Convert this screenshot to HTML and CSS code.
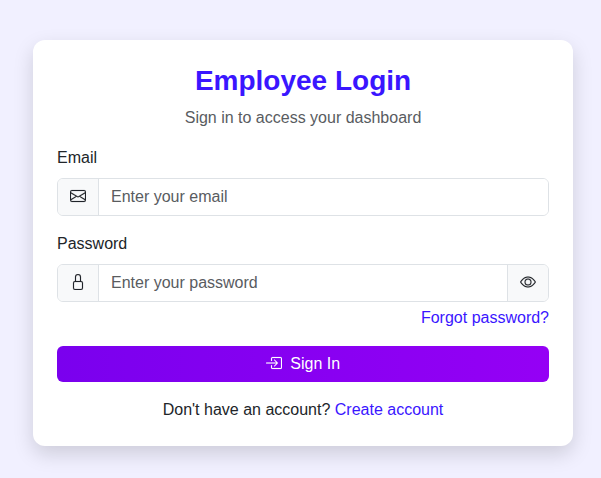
FILE: index.html
```html
<!DOCTYPE html>
<html lang="en">
<head>
<meta charset="utf-8">
<meta name="viewport" content="width=device-width, initial-scale=1">
<title>Employee Login</title>
<link rel="stylesheet" href="styles.css">
</head>
<body>
<main class="card">
  <h1 class="title">Employee Login</h1>
  <p class="subtitle">Sign in to access your dashboard</p>
  <form>
    <div class="field">
      <label for="email">Email</label>
      <div class="input-group">
        <span class="addon">
          <svg class="icon" viewBox="0 0 16 16" aria-hidden="true"><path d="M0 4a2 2 0 0 1 2-2h12a2 2 0 0 1 2 2v8a2 2 0 0 1-2 2H2a2 2 0 0 1-2-2zm2-1a1 1 0 0 0-1 1v.217l7 4.2 7-4.2V4a1 1 0 0 0-1-1zm13 2.383-4.708 2.825L15 11.105zm-.034 6.876-5.64-3.471L8 9.583l-1.326-.795-5.64 3.47A1 1 0 0 0 2 13h12a1 1 0 0 0 .966-.741M1 11.105l4.708-2.897L1 5.383z"/></svg>
        </span>
        <input id="email" type="email" placeholder="Enter your email">
      </div>
    </div>
    <div class="field">
      <label for="password">Password</label>
      <div class="input-group">
        <span class="addon">
          <svg class="icon" viewBox="0 0 16 16" aria-hidden="true"><path d="M8 1a2 2 0 0 1 2 2v4H6V3a2 2 0 0 1 2-2m3 6V3a3 3 0 0 0-6 0v4a2 2 0 0 0-2 2v5a2 2 0 0 0 2 2h6a2 2 0 0 0 2-2V9a2 2 0 0 0-2-2M5 8h6a1 1 0 0 1 1 1v5a1 1 0 0 1-1 1H5a1 1 0 0 1-1-1V9a1 1 0 0 1 1-1"/></svg>
        </span>
        <input id="password" type="password" placeholder="Enter your password">
        <button class="addon toggle" type="button" aria-label="Show password">
          <svg class="icon" viewBox="0 0 16 16" aria-hidden="true"><path d="M16 8s-3-5.500-8-5.500S0 8 0 8s3 5.500 8 5.500S16 8 16 8M1.173 8a13 13 0 0 1 1.660-2.043C4.120 4.668 5.880 3.500 8 3.500s3.879 1.168 5.168 2.457A13 13 0 0 1 14.828 8q-.086.130-.195.288c-.335.480-.830 1.120-1.465 1.755C11.879 11.332 10.119 12.500 8 12.500s-3.879-1.168-5.168-2.457A13 13 0 0 1 1.172 8z"/><path d="M8 5.500a2.500 2.500 0 1 0 0 5 2.500 2.500 0 0 0 0-5M4.500 8a3.500 3.500 0 1 1 7 0 3.500 3.500 0 0 1-7 0"/></svg>
        </button>
      </div>
      <div class="forgot"><a href="#">Forgot password?</a></div>
    </div>
    <button class="submit" type="submit">
      <svg class="icon" viewBox="0 0 16 16" aria-hidden="true"><path d="M6 3.500a.5.5 0 0 1 .5-.5h8a.5.5 0 0 1 .5.5v9a.5.5 0 0 1-.5.5h-8a.5.5 0 0 1-.5-.5v-2a.5.5 0 0 0-1 0v2A1.500 1.500 0 0 0 6.500 14h8a1.500 1.500 0 0 0 1.500-1.500v-9A1.500 1.500 0 0 0 14.500 2h-8A1.500 1.500 0 0 0 5 3.500v2a.5.5 0 0 0 1 0z"/><path d="M11.854 8.354a.5.5 0 0 0 0-.708l-3-3a.5.5 0 1 0-.708.708L10.293 7.500H.5a.5.5 0 0 0 0 1h9.793l-2.147 2.146a.5.5 0 0 0 .708.708z"/></svg>
      Sign In
    </button>
  </form>
  <p class="signup">Don't have an account? <a href="#">Create account</a></p>
</main>
</body>
</html>
```
FILE: styles.css
```css
*, *::before, *::after {
  box-sizing: border-box;
}

body {
  margin: 0;
  padding: 40px 28px 32px 33px;
  background: #f1f0ff;
  color: #212529;
  font-family: "Liberation Sans", Arial, sans-serif;
  font-size: 16px;
  line-height: 24px;
}

a {
  color: #3a16ff;
  text-decoration: none;
}

.card {
  max-width: 540px;
  margin: 0 auto;
  padding: 24px;
  background: #fff;
  border-radius: 12px;
  box-shadow: 0 8px 20px rgba(0, 0, 0, 0.15);
}

.title {
  margin: 0 0 8px;
  color: #3a16ff;
  font-size: 28px;
  line-height: 34px;
  text-align: center;
}

.subtitle {
  margin: 0 0 16px;
  color: #595c5f;
  text-align: center;
}

.field {
  margin-bottom: 16px;
}

.field label {
  display: block;
  margin-bottom: 8px;
}

.input-group {
  display: flex;
  height: 38px;
  border: 1px solid #dee2e6;
  border-radius: 6px;
  overflow: hidden;
}

.input-group:focus-within {
  border-color: #3a16ff;
}

.input-group input {
  flex: 1;
  min-width: 0;
  padding: 0 12px;
  border: 0;
  outline: 0;
  background: #fff;
  color: inherit;
  font: inherit;
}

.input-group input::placeholder {
  color: #595c5f;
  opacity: 1;
}

.addon {
  display: flex;
  align-items: center;
  padding: 0 12px 2px;
  background: #f8f9fa;
  color: #212529;
  border: 0 solid #dee2e6;
  border-right-width: 1px;
}

.toggle {
  border-width: 0 0 0 1px;
  cursor: pointer;
}

.icon {
  display: block;
  flex: none;
  width: 16px;
  height: 16px;
  fill: currentColor;
  stroke: currentColor;
  stroke-width: 0.15;
}

.forgot {
  margin-top: 4px;
  text-align: right;
}

.submit {
  display: block;
  width: 100%;
  padding: 6px 12px;
  border: 0;
  border-radius: 6px;
  background: linear-gradient(90deg, #7a00ee, #9500f5);
  color: #fff;
  font: inherit;
  line-height: 24px;
  text-align: center;
  cursor: pointer;
}

.submit .icon {
  display: inline-block;
  margin-right: 4px;
  vertical-align: -2px;
}

.signup {
  margin: 16px 0 0;
  text-align: center;
}
```
